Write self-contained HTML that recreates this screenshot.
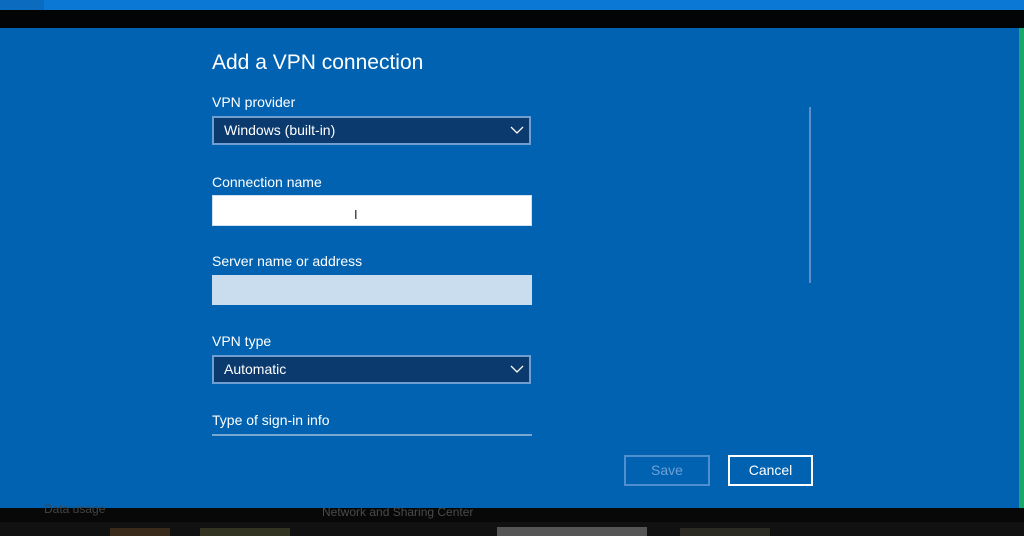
<!DOCTYPE html>
<html><head><style>
html,body{margin:0;padding:0;width:1024px;height:536px;overflow:hidden;background:#000;font-family:"Liberation Sans",sans-serif}
.a{position:absolute}
.lbl{color:#fff;font-size:14px}
.sel{background:#0a3a6e;border:2px solid #6f9fd0;box-sizing:border-box;color:#fff;font-size:14px;padding-left:10px;line-height:25px}
</style></head><body>
<div class="a" style="left:0;top:0;width:1024px;height:10px;background:#0a78d4"></div>
<div class="a" style="left:0;top:0;width:44px;height:10px;background:#0b6cbf"></div>
<div class="a" style="left:0;top:10px;width:1024px;height:18px;background:#020406"></div>
<div class="a" style="left:0;top:28px;width:1019px;height:480px;background:#0062b0"></div>
<div class="a" style="left:1019px;top:28px;width:5px;height:480px;background:#1aa86a"></div>
<div class="a" style="left:212px;top:51px;color:#fff;font-size:21px">Add a VPN connection</div>
<div class="a lbl" style="left:212px;top:94px">VPN provider</div>
<div class="a sel" style="left:212px;top:116px;width:319px;height:29px">Windows (built-in)</div>
<svg class="a" style="left:510px;top:125px" width="14" height="10"><path d="M1 2 L7 8 L13 2" stroke="#fff" fill="none" stroke-width="1.3"/></svg>
<div class="a lbl" style="left:212px;top:174px">Connection name</div>
<div class="a" style="left:212px;top:195px;width:320px;height:31px;background:#fff;border:1px solid #cfe0f0;box-sizing:border-box"></div>
<div class="a" style="left:354px;top:207px;color:#222;font-size:13px">I</div>
<div class="a lbl" style="left:212px;top:253px">Server name or address</div>
<div class="a" style="left:212px;top:275px;width:320px;height:30px;background:#c9ddef"></div>
<div class="a lbl" style="left:212px;top:333px">VPN type</div>
<div class="a sel" style="left:212px;top:355px;width:319px;height:29px">Automatic</div>
<svg class="a" style="left:510px;top:364px" width="14" height="10"><path d="M1 2 L7 8 L13 2" stroke="#fff" fill="none" stroke-width="1.3"/></svg>
<div class="a lbl" style="left:212px;top:412px">Type of sign-in info</div>
<div class="a" style="left:212px;top:434px;width:320px;height:2px;background:#7aa6d2"></div>
<div class="a" style="left:809px;top:107px;width:2px;height:176px;background:#5d8fc8"></div>
<div class="a" style="left:624px;top:455px;width:86px;height:31px;border:2px solid #4f8fd0;box-sizing:border-box;color:#6fa0d6;font-size:14px;text-align:center;line-height:27px">Save</div>
<div class="a" style="left:728px;top:455px;width:85px;height:31px;border:2px solid #fff;box-sizing:border-box;color:#fff;font-size:14px;text-align:center;line-height:27px">Cancel</div>
<div class="a" style="left:0;top:508px;width:1024px;height:14px;background:#080808"></div>
<div class="a" style="left:44px;top:502px;color:#444;font-size:12px">Data usage</div>
<div class="a" style="left:322px;top:505px;color:#4a4a4a;font-size:12px">Network and Sharing Center</div>
<div class="a" style="left:0;top:522px;width:1024px;height:14px;background:#111"></div>
<div class="a" style="left:497px;top:527px;width:150px;height:9px;background:#555"></div>
<div class="a" style="left:110px;top:528px;width:60px;height:8px;background:#3a2a1a"></div>
<div class="a" style="left:200px;top:528px;width:90px;height:8px;background:#332"></div>
<div class="a" style="left:680px;top:528px;width:90px;height:8px;background:#2a2a22"></div>
</body></html>
